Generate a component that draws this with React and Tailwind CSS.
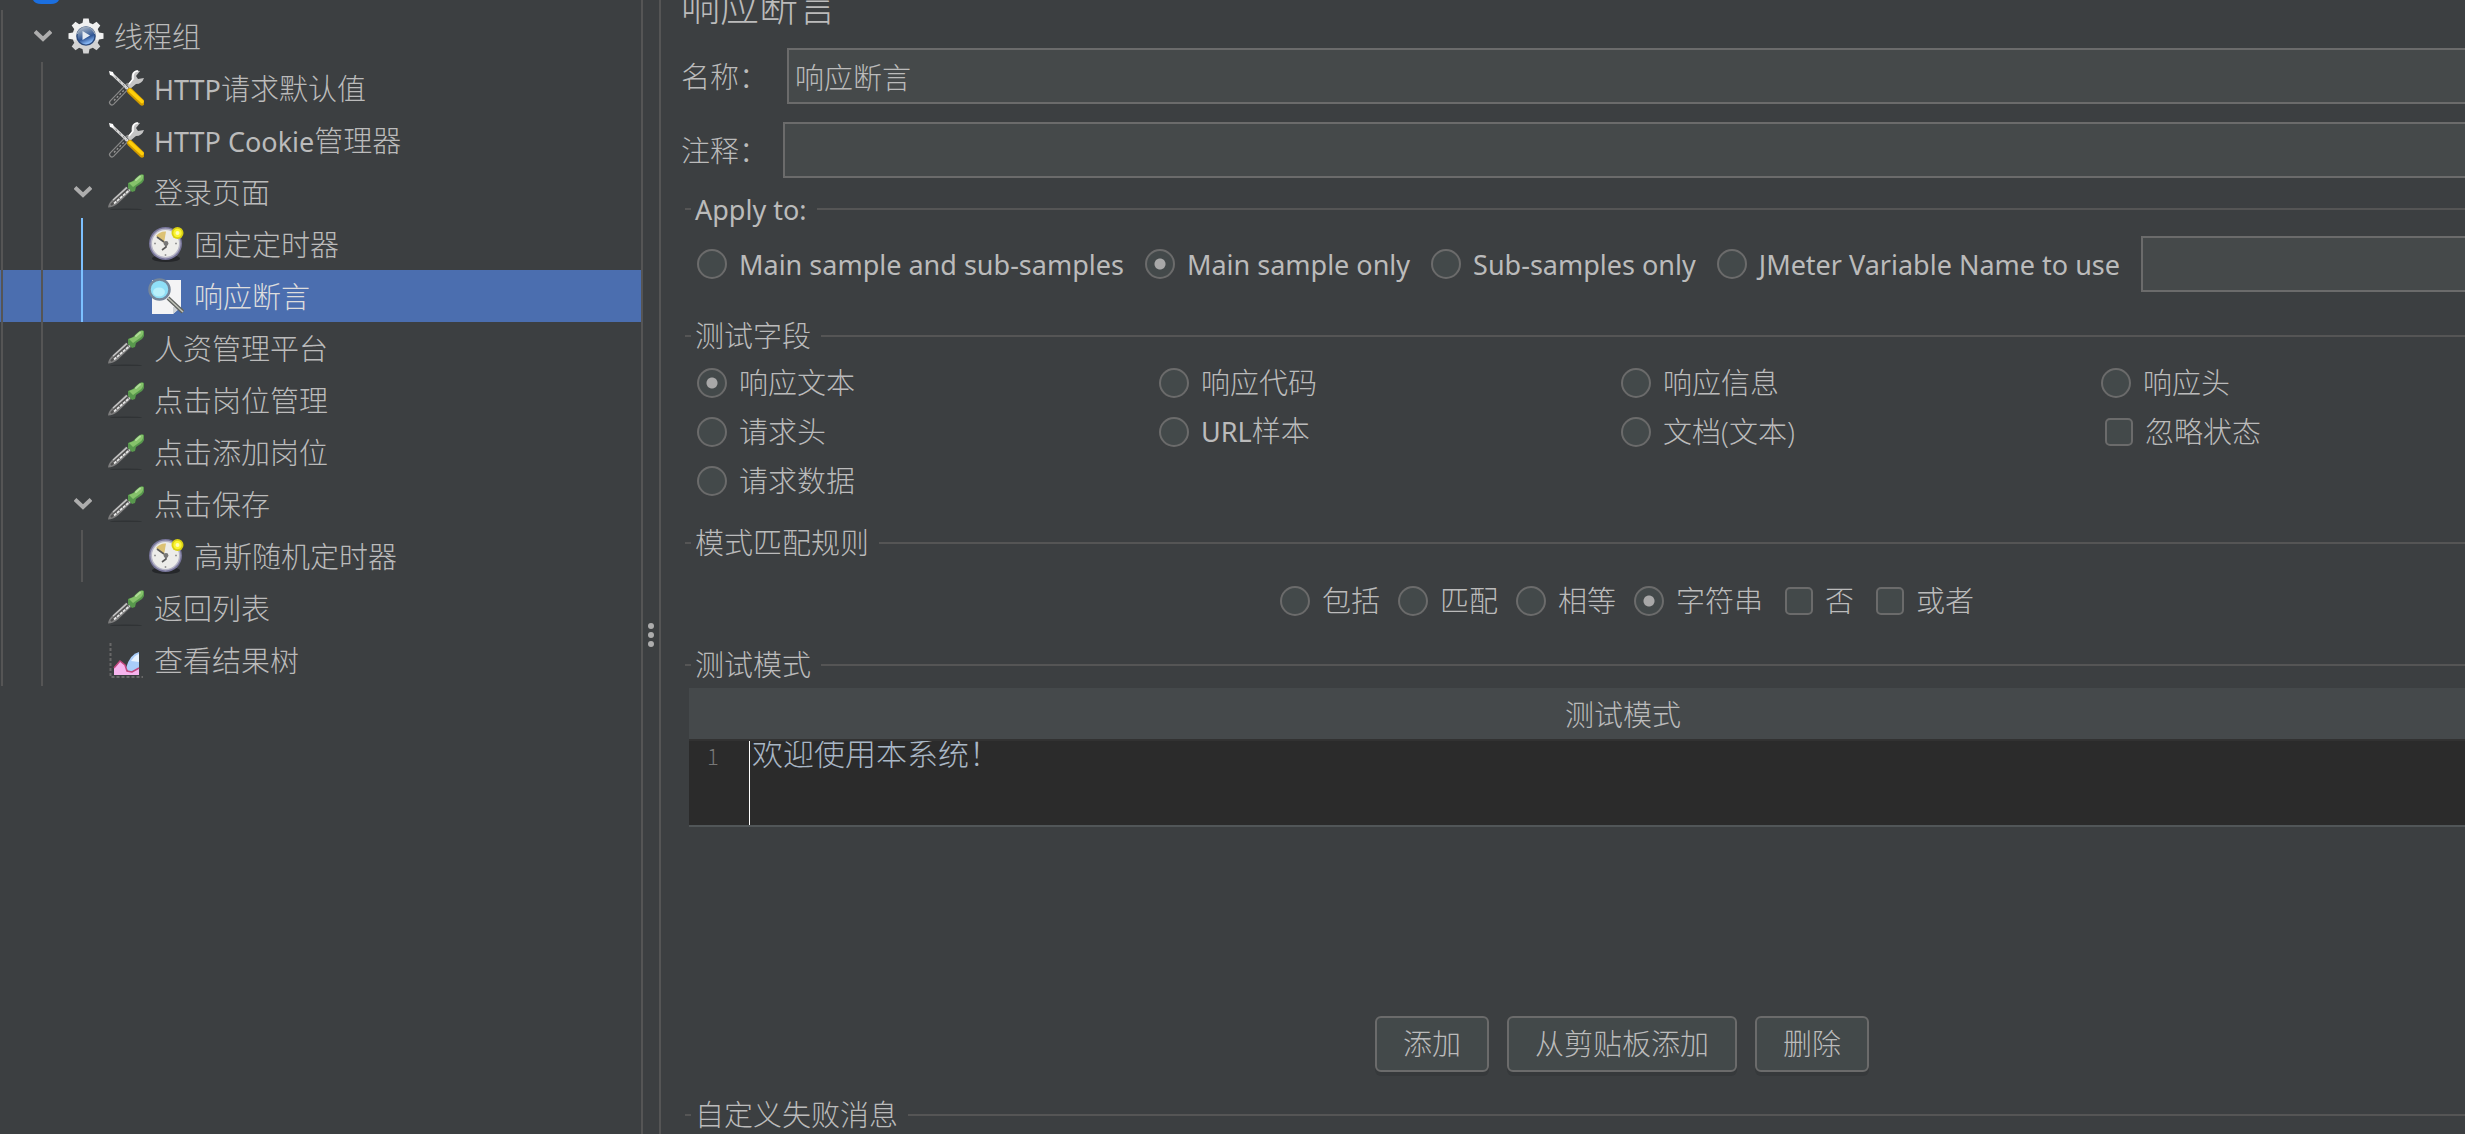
const FONT = "font-['Open_Sans','Noto_Sans_CJK_SC',sans-serif]";

const TEETH = [0, 45, 90, 135, 180, 225, 270, 315];

const GearIcon = () => (
  <svg className="size-9 shrink-0" viewBox="0 0 36 36" aria-hidden="true">
    <defs>
      <linearGradient id="gear" gradientUnits="userSpaceOnUse" x1="0" y1="0" x2="0" y2="36">
        <stop offset="0" stopColor="#ffffff" />
        <stop offset="1" stopColor="#c8c8c8" />
      </linearGradient>
      <linearGradient id="hub" x1="0" y1="0" x2="0.4" y2="1">
        <stop offset="0" stopColor="#b9c2cc" />
        <stop offset="0.45" stopColor="#5f7ba6" />
        <stop offset="0.7" stopColor="#2f5596" />
        <stop offset="1" stopColor="#84b4f2" />
      </linearGradient>
    </defs>
    <circle cx="18" cy="18" r="13.500" fill="url(#gear)" />
    {TEETH.map((angle) => (
      <path
        key={angle}
        d="M14 8 15.300 0.500h5.400L22 8z"
        fill={angle > 90 && angle < 270 ? "#d2d2d2" : "#f0f0f0"}
        transform={`rotate(${angle} 18 18)`}
      />
    ))}
    <circle cx="18" cy="18" r="9.800" fill="#2b4a7d" />
    <path d="M8.500 16a9.800 9.800 0 0 1 19 0z" fill="#9aa7b8" />
    <circle cx="18" cy="18" r="8.400" fill="url(#hub)" />
    <path d="M14.500 13v9l7.500-4.500z" fill="#e4eaf2" />
  </svg>
);

const ToolsIcon = () => (
  <svg className="size-9 shrink-0" viewBox="0 0 36 36" fill="none" aria-hidden="true">
    <path d="M4 32.500 20 16" stroke="#8a8a8a" strokeWidth="6" strokeLinecap="round" />
    <path d="M4 32.500 20 16" stroke="#3f4142" strokeWidth="3.600" strokeLinecap="round" />
    <path d="M6 30.500 20 16" stroke="#9a9a9a" strokeWidth="1.300" strokeDasharray="2 2" />
    <circle cx="4.500" cy="32" r="1.500" fill="#3c3f41" />
    <path d="M32 1q-6-2-8 3-1 4 0 6l-5 5 3 4 6-5q6 0 8-6l-6 1-2-3z" fill="#c4c4c4" />
    <path d="M30 1q-4 0-5 4v4l-4 5" stroke="#fff" strokeWidth="1.500" />
    <path d="m3 3 17 16" stroke="#d8d8d8" strokeWidth="2.500" />
    <path d="m4 4 15 14" stroke="#777" strokeWidth="1" strokeDasharray="2 3" />
    <path d="m1 1 4 1 1 4-4-1z" fill="#fff" />
    <path d="m22 21 12 11.500" stroke="#cf9a00" strokeWidth="6" strokeLinecap="round" />
    <path d="m22 20.500 12 11" stroke="#ffcf0a" strokeWidth="3.600" strokeLinecap="round" />
  </svg>
);

const DropperIcon = () => (
  <svg className="size-9 shrink-0" viewBox="0 0 36 36" fill="none" aria-hidden="true">
    <ellipse cx="18" cy="35.500" rx="16" ry="1" fill="#303335" />
    <path d="M0 33.500q0-4 5-8.500L18 12.500l5 4.500L10 29.500q-5 4-10 4z" fill="#7d7d7d" />
    <path d="M3 31 20 15" stroke="#505050" strokeWidth="2" />
    <path d="M6 29.500 22 15.500" stroke="#e6e6e6" strokeWidth="1.800" strokeDasharray="3 1" />
    <path d="M5 26 19 13.500" stroke="#c8c8c8" strokeWidth="1.200" />
    <path d="m20 9 5-2 4-4q4-4 7-2 2 3-2 8l-6 4-1 4-3 1-4-4z" fill="#58984d" />
    <path d="m21 9 5-2 4-4q3-3 5-2 1 4-3 7l-7 5z" fill="#86c26b" />
    <path d="m28 6 4-3.500" stroke="#b0dc98" strokeWidth="2" strokeLinecap="round" />
  </svg>
);

const TimerIcon = () => (
  <svg className="size-9 shrink-0" viewBox="0 0 36 36" aria-hidden="true">
    <ellipse cx="18" cy="32.500" rx="14" ry="3.500" fill="#25272a" />
    <circle cx="17.500" cy="17.500" r="16.500" fill="#77759a" />
    <circle cx="17.500" cy="17.500" r="15" fill="#b5b4c6" />
    <circle cx="17.500" cy="17.500" r="13.500" fill="#ededea" />
    <path d="M16 17 8 10q4-5 10-4.500z" fill="#dcc274" />
    <path d="m9 11 7 5M18 18v3l-4 3" stroke="#5a5a5a" strokeWidth="1.600" fill="none" />
    <circle cx="18" cy="17.500" r="2.400" fill="#777" />
    <path d="M17.500 28v2M6 17.500h2M27 17.500h2" stroke="#999" strokeWidth="1.500" />
    <circle cx="29.500" cy="7" r="6" fill="#d9d012" />
    <circle cx="29.500" cy="7" r="4.200" fill="#fbf531" />
    <circle cx="29.500" cy="7" r="2" fill="#fffdb8" />
  </svg>
);

const AssertionIcon = () => (
  <svg className="size-9 shrink-0" viewBox="0 0 36 36" fill="none" aria-hidden="true">
    <path d="M4 2h29v27l-8 7H4z" fill="#f4f4f5" />
    <path d="m33 29-8 7v-7z" fill="#cfd2d6" />
    <path d="m20 20 15 14" stroke="#5f625f" strokeWidth="4" />
    <path d="m20 20 15 14" stroke="#c0c2b8" strokeWidth="1.500" />
    <circle cx="11.500" cy="11.500" r="10" fill="#8fdff7" stroke="#75869a" strokeWidth="2.500" />
    <ellipse cx="11" cy="14" rx="6" ry="4.500" fill="#b9f0fb" />
  </svg>
);

const ChartIcon = () => (
  <svg className="size-9 shrink-0" viewBox="0 0 36 36" fill="none" aria-hidden="true">
    <path d="M2.500 1v34H35" stroke="#686868" strokeWidth="2" strokeDasharray="3 2" />
    <path d="M31 10v20l-9 2-4-6q4-14 13-16z" fill="#a9cdfa" />
    <path d="M31 12v8l-8-1q4-6 8-7z" fill="#e8f3ff" />
    <path d="M6 33v-7q4-4 6-7l5 4 2 6 5 1 7-3v6z" fill="#f7b4ee" />
    <path d="m6 26 6-7 5 4 2 6 5 1 7-4" stroke="#c2477e" strokeWidth="1.500" />
  </svg>
);

const Chevron = () => (
  <svg className="h-3 w-[18px] shrink-0" viewBox="0 0 18 12" fill="none" aria-hidden="true">
    <path d="m1 1.500 8 7.500 8-7.500" stroke="#adadad" strokeWidth="4" />
  </svg>
);

const ICONS = {
  gear: GearIcon,
  tools: ToolsIcon,
  dropper: DropperIcon,
  timer: TimerIcon,
  assertion: AssertionIcon,
  chart: ChartIcon,
};

const TREE = {
  icon: "gear",
  label: "线程组",
  children: [
    { icon: "tools", latin: "HTTP", label: "请求默认值" },
    { icon: "tools", latin: "HTTP Cookie", label: "管理器" },
    {
      icon: "dropper",
      label: "登录页面",
      active: true,
      children: [
        { icon: "timer", label: "固定定时器" },
        { icon: "assertion", label: "响应断言", selected: true },
      ],
    },
    { icon: "dropper", label: "人资管理平台" },
    { icon: "dropper", label: "点击岗位管理" },
    { icon: "dropper", label: "点击添加岗位" },
    {
      icon: "dropper",
      label: "点击保存",
      children: [{ icon: "timer", label: "高斯随机定时器" }],
    },
    { icon: "dropper", label: "返回列表" },
    { icon: "chart", label: "查看结果树" },
  ],
};

const INDENT = ["pl-[34px]", "pl-[74px]", "pl-[114px]"];
const GUIDE = ["left-[41px]", "left-[81px]"];

const Latin = ({ children }) => (
  <span className="font-['Noto_Sans',sans-serif] text-[27px] font-normal">{children}</span>
);

function TreeNode({ node, depth }) {
  const Icon = ICONS[node.icon];
  return (
    <li role="treeitem" aria-selected={!!node.selected}>
      <div
        className={`flex h-13 items-center ${INDENT[depth]} ${
          node.selected ? "bg-[#4b6eaf] text-[#dddddd]" : ""
        }`}
      >
        <span className="flex w-[34px] shrink-0">{node.children && <Chevron />}</span>
        <Icon />
        <span className="pt-0.5 pl-2.5 whitespace-nowrap">
          {node.latin && <Latin>{node.latin}</Latin>}
          {node.label}
        </span>
      </div>
      {node.children && (
        <ul role="group" className="relative">
          {node.children.map((child) => (
            <TreeNode key={child.label} node={child} depth={depth + 1} />
          ))}
          <span
            className={`absolute inset-y-0 w-0.5 ${GUIDE[depth]} ${
              node.active ? "bg-[#7cc0ff]" : "bg-[#555555]"
            }`}
          />
        </ul>
      )}
    </li>
  );
}

function Radio({ name, latin, label, checked }) {
  return (
    <label className="flex items-center gap-3 whitespace-nowrap">
      <input
        type="radio"
        name={name}
        defaultChecked={checked}
        className="size-[30px] shrink-0 appearance-none rounded-full border-2 border-[#6b6b6b] bg-[#43494a] checked:bg-[radial-gradient(circle,#a8a8a8_5px,#43494a_6px)]"
      />
      <span>
        {latin && <Latin>{latin}</Latin>}
        {label}
      </span>
    </label>
  );
}

function Check({ label }) {
  return (
    <label className="flex items-center gap-3 whitespace-nowrap">
      <input
        type="checkbox"
        className="size-7 shrink-0 appearance-none rounded-[5px] border-2 border-[#6b6b6b] bg-[#43494a]"
      />
      {label}
    </label>
  );
}

function Group({ title, className, children }) {
  return (
    <section className={className}>
      <h2 className="flex h-10 items-center pl-1.5">
        <span className="h-0.5 w-1.5 bg-[#555555]" />
        <span className="pr-2.5 pl-1 whitespace-nowrap">{title}</span>
        <span className="h-0.5 flex-1 bg-[#555555]" />
      </h2>
      {children}
    </section>
  );
}

const FIELD =
  "h-14 min-w-0 flex-1 border-2 border-[#6b6b6b] bg-[#45494a] px-1.5 text-[#bbbbbb] outline-none";
const BUTTON =
  "h-14 rounded-md border-2 border-[#6b6b6b] bg-[#43494a] px-[26px] shadow-[0_4px_0_#36393b]";

export default function App() {
  return (
    <div
      className={`flex h-screen overflow-hidden bg-[#3c3f41] text-[29px] leading-10 font-light text-[#bbbbbb] ${FONT}`}
    >
      <nav className="relative w-[641px] shrink-0 overflow-hidden" aria-label="测试计划">
        <div className="flex h-2.5 pl-8">
          <svg className="h-1 w-7" viewBox="0 0 28 4" aria-hidden="true">
            <path d="M1 0h26q-2 4-8 4H9Q3 4 1 0z" fill="#1b6fe0" />
          </svg>
        </div>
        <ul role="tree" className="relative">
          <TreeNode node={TREE} depth={0} />
          <span className="absolute inset-y-0 left-px w-0.5 bg-[#555555]" />
        </ul>
      </nav>

      <div className="flex w-5 shrink-0 flex-col items-center justify-center gap-[3px] border-x-2 border-[#555555] pt-[135px]">
        <span className="size-1.5 rounded-full bg-[#adadad]" />
        <span className="size-1.5 rounded-full bg-[#adadad]" />
        <span className="size-1.5 rounded-full bg-[#adadad]" />
      </div>

      <main className="min-w-0 flex-1 overflow-hidden pl-[18px]">
        <div className="w-[calc(100%+102px)]">
          <h1 className="-mt-4.5 h-[66px] pl-0.5 text-[39px] leading-12">响应断言</h1>
          <div className="flex items-center pl-0.5">
            <label htmlFor="name" className="w-[106px] shrink-0 pt-0.5">
              名称：
            </label>
            <input id="name" className={FIELD} defaultValue="响应断言" />
          </div>
          <div className="mt-4.5 flex items-center pl-0.5">
            <label htmlFor="comment" className="w-[102px] shrink-0 pt-0.5">
              注释：
            </label>
            <input id="comment" className={FIELD} />
          </div>

          <Group title={<Latin>Apply to:</Latin>} className="mt-[11px]">
            <div className="mt-[7px] flex items-center gap-[21px] pl-4.5">
              <Radio name="apply" latin="Main sample and sub-samples" />
              <Radio name="apply" latin="Main sample only" checked />
              <Radio name="apply" latin="Sub-samples only" />
              <Radio name="apply" latin="JMeter Variable Name to use" />
              <input aria-label="JMeter Variable Name" className={FIELD} />
            </div>
          </Group>

          <Group title="测试字段" className="mt-6">
            <div className="mt-0.5 grid grid-cols-[462fr_462fr_480fr_466fr] auto-rows-[49px] items-center pl-4.5">
              <Radio name="field" label="响应文本" checked />
              <Radio name="field" label="响应代码" />
              <Radio name="field" label="响应信息" />
              <Radio name="field" label="响应头" />
              <Radio name="field" label="请求头" />
              <Radio name="field" latin="URL" label="样本" />
              <Radio name="field" label="文档(文本)" />
              <div className="pl-1">
                <Check label="忽略状态" />
              </div>
              <Radio name="field" label="请求数据" />
            </div>
          </Group>

          <Group title="模式匹配规则" className="mt-4.5">
            <div className="mt-4.5 flex justify-center gap-[18px] pl-2">
              <Radio name="rule" label="包括" />
              <Radio name="rule" label="匹配" />
              <Radio name="rule" label="相等" />
              <Radio name="rule" label="字符串" checked />
              <div className="flex gap-[22px] pl-1">
                <Check label="否" />
                <Check label="或者" />
              </div>
            </div>
          </Group>

          <Group title="测试模式" className="mt-6">
            <div className="mt-[3px] mr-2.5 ml-2.5 h-[328px]">
              <table className="w-full border-b-2 border-[#515658]">
                <thead>
                  <tr className="h-13 border-b-2 border-[#323232] bg-[#45494b]">
                    <th className="p-0 pt-0.5 font-light">测试模式</th>
                  </tr>
                </thead>
                <tbody>
                  <tr>
                    <td className="bg-[#2b2b2b] p-0">
                      <div className="flex h-21">
                        <span className="w-15 pl-[18px] font-['Noto_Sans_CJK_SC',sans-serif] text-[22px] leading-7 text-[#777777]">
                          1
                        </span>
                        <textarea
                          aria-label="测试模式"
                          defaultValue="欢迎使用本系统！"
                          className="h-full flex-1 resize-none overflow-hidden border-l border-white pl-0.5 text-[31px] leading-6 text-[#a9b7c6] outline-none"
                        />
                      </div>
                    </td>
                  </tr>
                </tbody>
              </table>
            </div>
            <div className="flex justify-center gap-4.5 pr-0.5">
              <button className={BUTTON}>添加</button>
              <button className={BUTTON}>从剪贴板添加</button>
              <button className={BUTTON}>删除</button>
            </div>
          </Group>

          <Group title="自定义失败消息" className="mt-[23px]" />
        </div>
      </main>
    </div>
  );
}
